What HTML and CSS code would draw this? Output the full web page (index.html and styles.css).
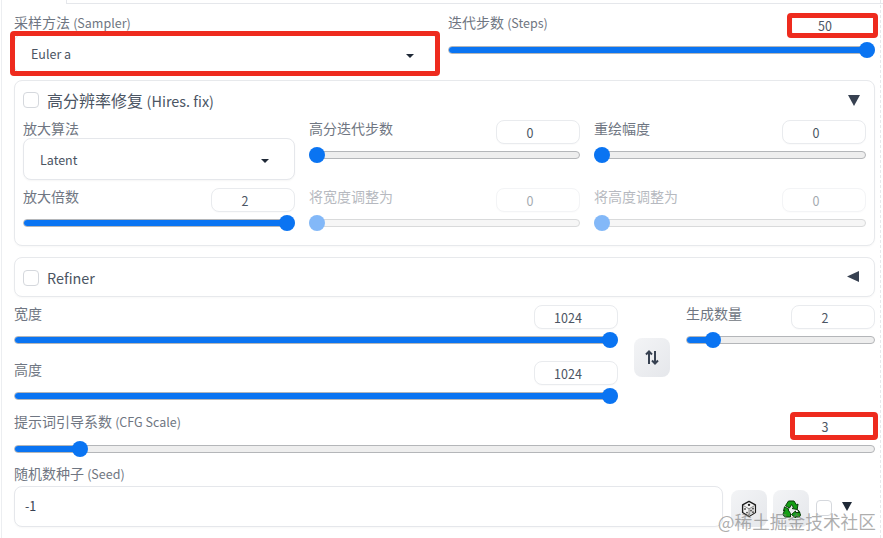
FILE: index.html
```html
<!DOCTYPE html>
<html lang="zh-CN">
<head>
<meta charset="utf-8">
<title>txt2img</title>
<link rel="stylesheet" href="styles.css">
</head>
<body>
<div class="page">
  <div class="tabline"></div>

  <div class="row-sampler">
    <div>
      <div class="label solo">采样方法 <span class="latin">(Sampler)</span></div>
      <div class="dropdown tall marked mark-sampler"><span>Euler a</span><i class="caret"></i></div>
    </div>
    <div>
      <div class="slider-head steps-head">
        <div class="label">迭代步数 <span class="latin">(Steps)</span></div>
        <div class="num marked mark-steps">50</div>
      </div>
      <div class="slider"><div class="track"><div class="fill full"></div></div><div class="thumb at-end"></div></div>
    </div>
  </div>

  <section class="panel hires">
    <div class="panel-head">
      <span class="check"></span><span class="panel-title">高分辨率修复 <span class="title-latin">(Hires. fix)</span></span>
      <svg class="tri" width="12" height="11" viewBox="0 0 12 11"><path d="M0 0h12L6 11z"/></svg>
    </div>
    <div class="hires-grid">
      <div>
        <div class="label solo">放大算法</div>
        <div class="dropdown"><span>Latent</span><i class="caret"></i></div>
      </div>
      <div>
        <div class="slider-head"><div class="label">高分迭代步数</div><div class="num">0</div></div>
        <div class="slider"><div class="track"></div><div class="thumb at-start"></div></div>
      </div>
      <div>
        <div class="slider-head"><div class="label">重绘幅度</div><div class="num">0</div></div>
        <div class="slider"><div class="track"></div><div class="thumb at-start"></div></div>
      </div>
      <div>
        <div class="slider-head"><div class="label">放大倍数</div><div class="num">2</div></div>
        <div class="slider"><div class="track"><div class="fill full"></div></div><div class="thumb at-end"></div></div>
      </div>
      <div class="disabled">
        <div class="slider-head"><div class="label">将宽度调整为</div><div class="num">0</div></div>
        <div class="slider"><div class="track"></div><div class="thumb at-start"></div></div>
      </div>
      <div class="disabled">
        <div class="slider-head"><div class="label">将高度调整为</div><div class="num">0</div></div>
        <div class="slider"><div class="track"></div><div class="thumb at-start"></div></div>
      </div>
    </div>
  </section>

  <section class="panel refiner">
    <div class="panel-head">
      <span class="check"></span><span class="panel-title title-latin">Refiner</span>
      <svg class="tri tri-left" width="12" height="11" viewBox="0 0 12 11"><path d="M12 0v11L0 5.500z"/></svg>
    </div>
  </section>

  <div class="size-grid">
    <div class="size-col">
      <div>
        <div class="slider-head"><div class="label">宽度</div><div class="num">1024</div></div>
        <div class="slider"><div class="track"><div class="fill full"></div></div><div class="thumb at-end"></div></div>
      </div>
      <div>
        <div class="slider-head"><div class="label">高度</div><div class="num">1024</div></div>
        <div class="slider"><div class="track"><div class="fill full"></div></div><div class="thumb at-end"></div></div>
      </div>
    </div>
    <button class="swap" type="button">
      <svg width="14" height="15" viewBox="0 0 14 15" fill="none" stroke="#374151" stroke-width="2"><path d="M4 14V1.500M1 4.500l3-3 3 3M10 1v12.500M7 10.500l3 3 3-3"/></svg>
    </button>
    <div>
      <div class="slider-head"><div class="label">生成数量</div><div class="num">2</div></div>
      <div class="slider"><div class="track"><div class="fill" style="width:14%"></div></div><div class="thumb" style="left:19px"></div></div>
    </div>
  </div>

  <div class="cfg">
    <div class="slider-head"><div class="label cfg-label">提示词引导系数 <span class="latin">(CFG Scale)</span></div><div class="num marked mark-cfg">3</div></div>
    <div class="slider"><div class="track"><div class="fill" style="width:7%"></div></div><div class="thumb" style="left:58px"></div></div>
  </div>

  <div class="seed-label label">随机数种子 <span class="latin">(Seed)</span></div>
  <div class="seed-row">
    <div class="seed-input">-1</div>
    <button class="tool" type="button">
      <svg width="16" height="18" viewBox="0 0 20 22">
        <path d="M10 1.500l8 4.300v9.600l-8 5-8-5V5.800z" fill="#f4f4f4" stroke="#1c1c1c" stroke-width="1.700" stroke-linejoin="round"/>
        <path d="M10 10.800l7.500-4.500V15l-7.500 4.700z" fill="#d9d9d9"/>
        <path d="M2.500 6.500l7.500 4.300 7.500-4.300M10 10.800V20" fill="none" stroke="#666" stroke-width=".9"/>
        <circle cx="10" cy="5.800" r="1.500" fill="#222"/>
        <circle cx="5" cy="11" r="1.100" fill="#444"/><circle cx="7.500" cy="15.500" r="1.100" fill="#444"/>
        <circle cx="15" cy="10.500" r="1.100" fill="#444"/><circle cx="12.500" cy="13" r="1.100" fill="#444"/><circle cx="15" cy="15" r="1.100" fill="#444"/>
      </svg>
    </button>
    <button class="tool" type="button">
      <svg width="19" height="18" viewBox="0 0 19 18" fill="#15a015" stroke="#0a3d0a" stroke-width="1" stroke-linejoin="round">
        <path d="M6.500 1h5.500l2.500 4 1.500-1-.8 5.500-5.200-1 1.500-1L9.500 4.500 7.500 8 3.500 5.700z"/>
        <path d="M2.500 6.800l4.500 2.400-.9.6 2.400 3.700v3.500H4c-2 0-3.500-2-2.700-3.800L3 10 1.500 11z" />
        <path d="M15.500 9.500l2.800 4.500c.7 1.800-.5 3-2.300 3h-2.500v1L9.500 14.500 13.500 11v1.500h4.500z"/>
      </svg>
    </button>
    <span class="check seed-check"></span>
    <svg class="tri seed-tri" width="10" height="9" viewBox="0 0 10 9"><path d="M0 0h10L5 9z"/></svg>
  </div>

  <div class="watermark">@稀土掘金技术社区</div>
</div>
</body>
</html>
```
FILE: styles.css
```css
* { box-sizing: border-box; }
html, body { margin: 0; padding: 0; background: #fff; }
body {
  font-family: "Noto Sans CJK SC", "Noto Sans", sans-serif;
  color: #4b5563;
}
.page {
  position: relative;
  width: 883px;
  height: 538px;
  overflow: hidden;
  padding: 0 8px 0 14px;
  background: #fff;
}
.page::before {
  content: "";
  position: absolute;
  left: 1px;
  top: 0;
  bottom: 0;
  border-left: 1px solid #eceef1;
}
.page::after {
  content: "";
  position: absolute;
  right: 2px;
  top: 0;
  bottom: 0;
  border-left: 1px dashed #e6e8eb;
}
.tabline {
  height: 4px;
  margin: 0 -8px 0 52px;
  border-left: 1px solid #e5e7eb;
  border-bottom: 1px solid #e5e7eb;
}
.label {
  font-size: 14px;
  line-height: 16px;
  color: #6f7682;
  white-space: nowrap;
}
.label.solo { margin-bottom: 2px; }
.latin { font-size: 12.500px; }
.row-sampler {
  display: grid;
  grid-template-columns: 424px 427px;
  column-gap: 10px;
  margin-top: 10px;
  height: 59px;
}
.row-sampler .label.solo { margin-bottom: 3px; }
.dropdown {
  display: flex;
  align-items: center;
  justify-content: space-between;
  height: 42px;
  margin-top: 1px;
  padding: 0 25px 0 16px;
  font-size: 12.500px;
  background: #fff;
  border: 1px solid #e5e7eb;
  border-radius: 8px;
  box-shadow: 0 1px 2px rgba(0, 0, 0, .04);
}
.dropdown.tall {
  height: 40px;
  padding: 0 23px 2px 16px;
}
.caret {
  display: block;
  width: 0;
  height: 0;
  margin-top: 3px;
  border-left: 4.500px solid transparent;
  border-right: 4.500px solid transparent;
  border-top: 4.500px solid #1f2937;
}
.tall .caret { margin-top: 5px; }
.marked { position: relative; }
.marked::after {
  content: "";
  position: absolute;
  border: 5px solid #ee2b1e;
  border-radius: 4px;
}
.mark-sampler::after { inset: -4px -3px -3px -5px; }
.mark-steps { margin-top: -1px; }
.mark-steps::after { inset: -1px -4px -2px -5px; }
.mark-cfg::after { inset: -3px -4px -3px -2px; }
.slider-head {
  display: flex;
  justify-content: space-between;
  align-items: flex-start;
  height: 27px;
}
.steps-head { height: 28px; }
.cfg-label { margin-top: -1px; }
.num {
  width: 84px;
  height: 24px;
  padding-right: 16px;
  font-size: 12.500px;
  line-height: 24px;
  text-align: center;
  background: #fff;
  border: 1px solid #e9ebee;
  border-radius: 8px;
  box-shadow: 0 1px 1px rgba(0, 0, 0, .02);
}
.slider {
  position: relative;
  height: 16px;
  display: flex;
  align-items: center;
}
.track {
  width: 100%;
  height: 8px;
  overflow: hidden;
  background: #eeeeee;
  border: 1px solid #b4b6b9;
  border-radius: 4px;
}
.fill {
  height: 100%;
  margin: -1px;
  box-sizing: content-box;
  padding: 1px;
  background: #0a74f2;
}
.fill.full { width: 100%; }
.thumb {
  position: absolute;
  top: 0;
  width: 16px;
  height: 16px;
  border-radius: 50%;
  background: #0a74f2;
}
.at-start { left: 0; }
.at-end { right: 0; }
.panel {
  border: 1px solid #e7e9ec;
  border-radius: 8px;
  padding: 9px 8px;
  background: #fff;
  box-shadow: 0 1px 2px rgba(0, 0, 0, .03);
}
.hires {
  height: 166px;
  margin-top: 7px;
}
.refiner {
  height: 40px;
  margin-top: 11px;
  padding-top: 10px;
}
.panel-head {
  display: flex;
  align-items: center;
  height: 20px;
}
.check {
  display: block;
  flex: none;
  width: 16px;
  height: 16px;
  background: #fff;
  border: 1px solid #d5d8dd;
  border-radius: 4px;
}
.panel-title {
  margin-left: 8px;
  font-size: 16px;
  line-height: 20px;
}
.title-latin { font-size: 14.400px; }
.panel-head .tri {
  margin-left: auto;
  margin-right: 6px;
  fill: #374151;
}
.panel-head .tri-left {
  margin-right: 7px;
  margin-bottom: 4px;
}
.hires-grid {
  display: grid;
  grid-template-columns: 272px 271px 272px;
  grid-template-rows: 61px 43px;
  column-gap: 14px;
  row-gap: 7px;
  margin-top: 10px;
}
.hires-grid .dropdown { margin-top: 0; }
.disabled { opacity: .5; }
.size-grid {
  display: grid;
  grid-template-columns: 604px 36px 189px;
  column-gap: 16px;
  margin-top: 8px;
  height: 99px;
}
.size-col {
  display: flex;
  flex-direction: column;
  gap: 13px;
}
.swap {
  display: flex;
  align-items: center;
  justify-content: center;
  width: 36px;
  height: 39px;
  margin-top: 33px;
  padding: 0;
  border: 0;
  border-radius: 8px;
  background: linear-gradient(135deg, #f3f4f6, #e5e7eb);
}
.cfg { margin-top: 10px; }
.seed-label { margin-top: 8px; }
.seed-row {
  display: flex;
  align-items: center;
  height: 41px;
  margin-top: 4px;
}
.seed-input {
  flex: none;
  width: 709px;
  height: 41px;
  padding-left: 10px;
  font-size: 12.500px;
  line-height: 38px;
  color: #374151;
  background: #fff;
  border: 1px solid #e5e7eb;
  border-radius: 8px;
  box-shadow: 0 1px 2px rgba(0, 0, 0, .03);
}
.tool {
  display: flex;
  align-items: center;
  justify-content: center;
  flex: none;
  width: 36px;
  height: 37px;
  margin-left: 6px;
  margin-top: 4px;
  padding: 0;
  border: 0;
  border-radius: 8px;
  background: linear-gradient(135deg, #f3f4f6, #e5e7eb);
}
.tool:first-of-type { margin-left: 8px; }
.seed-check {
  margin-left: 7px;
  margin-top: 2px;
}
.seed-tri {
  margin-left: 10px;
  fill: #1f2937;
}
.watermark {
  position: absolute;
  right: 7px;
  top: 509px;
  font-size: 17.700px;
  line-height: 24px;
  color: rgba(120, 120, 120, .6);
  white-space: nowrap;
}
```
